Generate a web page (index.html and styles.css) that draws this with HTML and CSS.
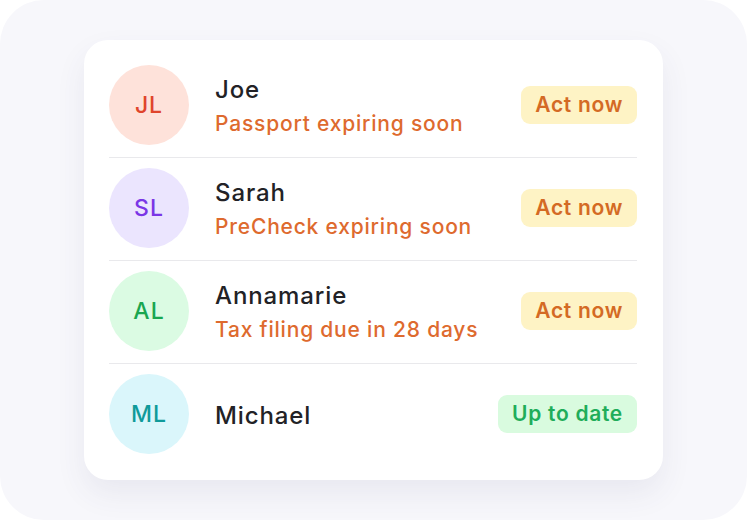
FILE: index.html
```html
<!DOCTYPE html>
<html lang="en">
  <head>
    <meta charset="UTF-8" />
    <title>Family documents</title>
    <link rel="stylesheet" href="styles.css">
  </head>
  <body>
    <div class="frame">
      <div class="card">
        <div class="row">
          <div class="avatar red">JL</div>
          <div class="info">
            <div class="name">Joe</div>
            <div class="note">Passport expiring soon</div>
          </div>
          <span class="badge warn">Act now</span>
        </div>
        <div class="row">
          <div class="avatar purple">SL</div>
          <div class="info">
            <div class="name">Sarah</div>
            <div class="note">PreCheck expiring soon</div>
          </div>
          <span class="badge warn">Act now</span>
        </div>
        <div class="row">
          <div class="avatar green">AL</div>
          <div class="info">
            <div class="name">Annamarie</div>
            <div class="note">Tax filing due in 28 days</div>
          </div>
          <span class="badge warn">Act now</span>
        </div>
        <div class="row">
          <div class="avatar teal">ML</div>
          <div class="info">
            <div class="name">Michael</div>
          </div>
          <span class="badge ok">Up to date</span>
        </div>
      </div>
    </div>
  </body>
</html>
```

FILE: styles.css
```css
html {
  background: #ffffff;
}
body {
  margin: 0;
  font-family: Inter, "Noto Sans", sans-serif;
  color: #222226;
}
.frame {
  width: 747px;
  height: 520px;
  box-sizing: border-box;
  background: #f7f7fb;
  border-radius: 44px;
  padding: 40px 84px;
}
.card {
  background: #ffffff;
  border-radius: 24px;
  padding: 25px 26px 26px 25px;
  box-shadow: 0 14px 30px rgba(60, 60, 110, 0.08);
}
.row {
  display: flex;
  align-items: center;
  padding: 10px 0 12px;
  border-bottom: 1px solid #e9e9ec;
}
.row:first-child {
  padding-top: 0;
}
.row:last-child {
  padding-bottom: 0;
  border-bottom: none;
}
.avatar {
  width: 80px;
  height: 80px;
  border-radius: 50%;
  display: flex;
  align-items: center;
  justify-content: center;
  font-size: 23px;
  font-weight: 500;
  letter-spacing: 1px;
  flex-shrink: 0;
}
.red {
  background: #fee2da;
  color: #e0452c;
}
.purple {
  background: #ebe5fe;
  color: #7a36e6;
}
.green {
  background: #dbfbe3;
  color: #19a650;
}
.teal {
  background: #daf6fb;
  color: #0f9a9a;
}
.info {
  flex: 1;
  margin-left: 26px;
  padding-top: 4px;
}
.name {
  font-size: 24px;
  font-weight: 500;
  letter-spacing: 0.9px;
  line-height: 30px;
}
.note {
  margin-top: 4px;
  font-size: 21px;
  font-weight: 500;
  letter-spacing: 0.8px;
  line-height: 30px;
  color: #de6a2e;
}
.badge {
  font-size: 21px;
  font-weight: 600;
  letter-spacing: 0.7px;
  line-height: 38px;
  padding: 0 14px;
  border-radius: 9px;
}
.warn {
  background: #fef3c5;
  color: #d46a24;
}
.ok {
  background: #d9fbdf;
  color: #1fad5a;
}
```
